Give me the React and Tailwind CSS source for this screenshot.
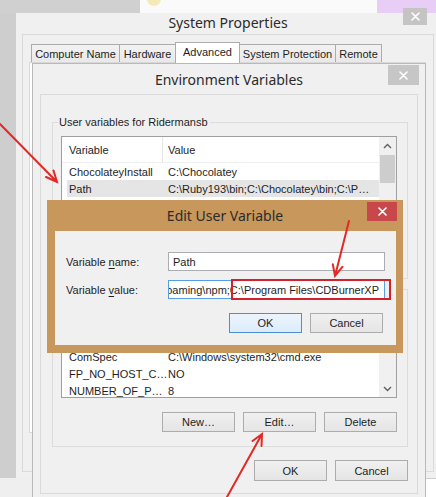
import React from "react";

function CloseX({ className }) {
  return (
    <svg width="9" height="9" viewBox="0 0 9 9" className={className}>
      <path d="M1 1 L8 8 M8 1 L1 8" stroke="white" strokeWidth="1.6" strokeLinecap="round" />
    </svg>
  );
}

function Chevron({ up }) {
  return (
    <svg width="9" height="6" viewBox="0 0 9 6">
      <path
        d={up ? "M1 5 L4.5 1.5 L8 5" : "M1 1 L4.5 4.5 L8 1"}
        stroke="#606060"
        strokeWidth="1.4"
        fill="none"
      />
    </svg>
  );
}

function Btn({ children, className = "" }) {
  return (
    <div
      className={
        "flex items-center justify-center h-[20px] w-[73px] border border-[#acacac] bg-gradient-to-b from-[#f0f0f0] to-[#e5e5e5] text-[#1e1e1e] " +
        className
      }
    >
      {children}
    </div>
  );
}

function ListView({ rows, selected, scrolled }) {
  return (
    <div className="flex h-[95px] w-[336px] border border-[#9f9f9f] bg-white overflow-hidden">
      <div className={"flex flex-1 flex-col " + (scrolled ? "justify-end translate-y-[2px]" : "")}>
        {!scrolled && (
          <div className="flex h-[26px] shrink-0 items-center border-b border-[#eeeeee]">
            <div className="w-[101px] h-full flex items-center pl-[7px] border-r border-[#e5e5e5]">Variable</div>
            <div className="pl-[5px]">Value</div>
          </div>
        )}
        {rows.map((r, i) => (
          <div
            key={i}
            className={
              "flex h-[17px] shrink-0 items-center " +
              (r[0] === selected ? "bg-[#e5e5e5] ml-[5px]" : "")
            }
          >
            <div className={r[0] === selected ? "w-[96px] pl-[2px]" : "w-[101px] pl-[7px]"}>{r[0]}</div>
            <div className="pl-[5px] whitespace-nowrap">{r[1]}</div>
          </div>
        ))}
      </div>
      <div className="flex w-[17px] flex-col bg-[#f0f0f0]">
        {scrolled ? (
          <>
            <div className="flex-1" />
            <div className="flex h-[17px] items-center justify-center">
              <Chevron />
            </div>
          </>
        ) : (
          <>
            <div className="flex h-[18px] items-center justify-center">
              <Chevron up />
            </div>
            <div className="mx-[1px] h-[28px] bg-[#cdcdcd]" />
          </>
        )}
      </div>
    </div>
  );
}

function Group({ label, rows, selected, scrolled, className = "", pb, buttons }) {
  return (
    <fieldset
      className={
        "m-0 ml-[11px] w-[356px] border border-[#dcdcdc] pl-[8px] pr-[10px] pt-[6px] " + className + " " + pb
      }
    >
      <legend className="-ml-[3px] h-[16px] pl-[1px] pr-[2px] leading-[16px]">{label}</legend>
      <ListView rows={rows} selected={selected} scrolled={scrolled} />
      <div className="mt-[14px] flex justify-end gap-[8px]">
        <Btn>{buttons ? "New…" : ""}</Btn>
        <Btn>{buttons ? "Edit…" : ""}</Btn>
        <Btn>{buttons ? "Delete" : ""}</Btn>
      </div>
    </fieldset>
  );
}

function SystemProperties() {
  const tabs = [
    { t: "Computer Name", w: "w-[89px]" },
    { t: "Hardware", w: "w-[57px]" },
    { t: "Advanced", w: "w-[65px]", sel: true },
    { t: "System Protection", w: "w-[97px]" },
    { t: "Remote", w: "w-[47px]" },
  ];
  return (
    <div className="absolute left-[16px] top-[13px] w-[424px] h-[465px] bg-[#f0f0f0]">
      <div className="relative flex h-[21px] items-center justify-center font-['Noto_Sans',sans-serif] text-[14px] leading-[20px] text-[#2b2b2b]">
        <span className="-mt-[1px]">System Properties</span>
        <div className="absolute right-[13px] -top-[5px] flex h-[17px] w-[24px] items-center justify-center bg-[#c4c4c4]">
          <CloseX />
        </div>
      </div>
      <div className="mx-[6px] h-[438px] border border-[#dadada]">
        <div className="ml-[8px] mt-[7px] flex h-[20px] items-end whitespace-nowrap leading-[16px]">
          {tabs.map((tab, i) => (
            <div
              key={tab.t}
              className={
                tab.w +
                " flex items-center justify-center border border-b-0 border-[#acacac] " +
                (i > 0 ? "-ml-px " : "") +
                (tab.sel ? "relative z-10 h-[21px] -mb-px bg-white pb-[2px]" : "h-[18px] bg-gradient-to-b from-[#f2f2f2] to-[#e9e9e9]")
              }
            >
              {tab.t}
            </div>
          ))}
        </div>
        <div className="ml-[6px] h-[371px] w-[397px] border border-[#d9d9d9] bg-white" />
      </div>
    </div>
  );
}

function EnvVars() {
  return (
    <div className="absolute left-[32px] top-[63px] w-[394px] h-[440px] bg-[#f0f0f0] border-l border-r border-t border-[#b9b9b9]">
      <div className="relative flex h-[30px] items-center justify-center font-['Noto_Sans',sans-serif] text-[14px] leading-[20px] text-[#2b2b2b]">
        <span className="mt-[1px]">Environment Variables</span>
        <div className="absolute right-[6px] top-[1px] flex h-[20px] w-[31px] items-center justify-center bg-[#c6c6c6]">
          <CloseX />
        </div>
      </div>
      <div className="mx-[7px] h-[400px] border border-[#dadada] leading-[16px] text-[#1e1e1e]">
        <Group
          className="mt-[19px]"
          pb="pb-[13px]"
          label="User variables for Ridermansb"
          selected="Path"
          rows={[
            ["ChocolateyInstall", "C:\\Chocolatey"],
            ["Path", "C:\\Ruby193\\bin;C:\\Chocolatey\\bin;C:\\P…"],
          ]}
        />
        <Group
          className="mt-[2px]"
          pb="pb-[14px]"
          label=""
          scrolled
          buttons
          rows={[
            ["ComSpec", "C:\\Windows\\system32\\cmd.exe"],
            ["FP_NO_HOST_C…", "NO"],
            ["NUMBER_OF_P…", "8"],
          ]}
        />
        <div className="ml-[11px] mt-[13px] flex w-[356px] justify-end gap-[8px]">
          <Btn className="h-[21px]">OK</Btn>
          <Btn className="h-[21px]">Cancel</Btn>
        </div>
      </div>
    </div>
  );
}

function EditDialog() {
  return (
    <div className="absolute left-[47px] top-[200px] w-[356px] h-[153px] bg-[#c8975c]">
      <div className="relative flex h-[31px] items-center justify-center font-['Noto_Sans',sans-serif] text-[14px] leading-[20px] text-[#2b2b2b]">
        <span>Edit User Variable</span>
        <div className="absolute right-[6px] top-[2px] flex h-[19px] w-[30px] items-center justify-center bg-[#c7474b]">
          <CloseX />
        </div>
      </div>
      <div className="ml-[8px] mr-[7px] h-[114px] bg-[#f0f0f0] pl-[11px] pt-[21px] leading-[16px] text-[#1e1e1e]">
        <div className="flex items-center">
          <div className="w-[102px]">
            Variable <span className="underline underline-offset-2">n</span>ame:
          </div>
          <div className="flex h-[19px] w-[217px] items-center border border-[#abadb3] bg-white pl-[4px]">Path</div>
        </div>
        <div className="mt-[9px] flex items-center">
          <div className="w-[102px]">
            Variable <span className="underline underline-offset-2">v</span>alue:
          </div>
          <div className="flex h-[19px] w-[217px] items-center justify-end overflow-hidden whitespace-nowrap border border-[#569de5] bg-white pr-[5px]">
            Roaming\npm;C:\Program Files\CDBurnerXP
          </div>
        </div>
        <div className="mt-[14px] flex justify-end gap-[8px] pr-[13px]">
          <div className="flex h-[20px] w-[73px] items-center justify-center border border-[#4a8fd0] bg-gradient-to-b from-[#ecf4fc] to-[#dcecfc]">
            OK
          </div>
          <Btn className="w-[72px]">Cancel</Btn>
        </div>
      </div>
    </div>
  );
}

function Arrows() {
  const c = "#e12a26";
  return (
    <svg className="pointer-events-none absolute left-0 top-0" width="436" height="497" viewBox="0 0 436 497">
      <g stroke={c} strokeWidth="2" fill="none" strokeLinecap="round">
        <path d="M0 124 L57 182 M46 177 L57 182 L53.5 170.5" />
        <path d="M227 497 L262 434 M252.5 441 L262 434 L261.5 446" />
        <path d="M349 221 L335 276 M332.8 264.2 L335 276 L342.6 266.7" />
      </g>
    </svg>
  );
}

export default function App() {
  return (
    <div className="relative w-[436px] h-[497px] overflow-hidden bg-[#cecece] font-['Liberation_Sans',Arial,sans-serif] text-[11px] text-[#1e1e1e]">
      <div className="flex h-[13px]">
        <div className="w-[140px] bg-[#d0d0d0]" />
        <div className="relative w-[237px] overflow-hidden bg-[#fafafa]">
          <div className="absolute left-[7px] -top-[8px] h-[14px] w-[14px] rounded-full bg-[#f4eab8]" />
        </div>
        <div className="flex-1 bg-[#e8cdf6]" />
      </div>
      <div className="absolute left-0 top-[478px] h-[19px] w-[32px] bg-[#efefef]" />
      <div className="absolute left-[426px] top-[479px] h-[18px] w-[10px] bg-white" />
      <SystemProperties />
      <EnvVars />
      <EditDialog />
      <div className="pointer-events-none absolute left-[231px] top-[279px] h-[21px] w-[160px] border-2 border-[#d3212d]" />
      <Arrows />
    </div>
  );
}
